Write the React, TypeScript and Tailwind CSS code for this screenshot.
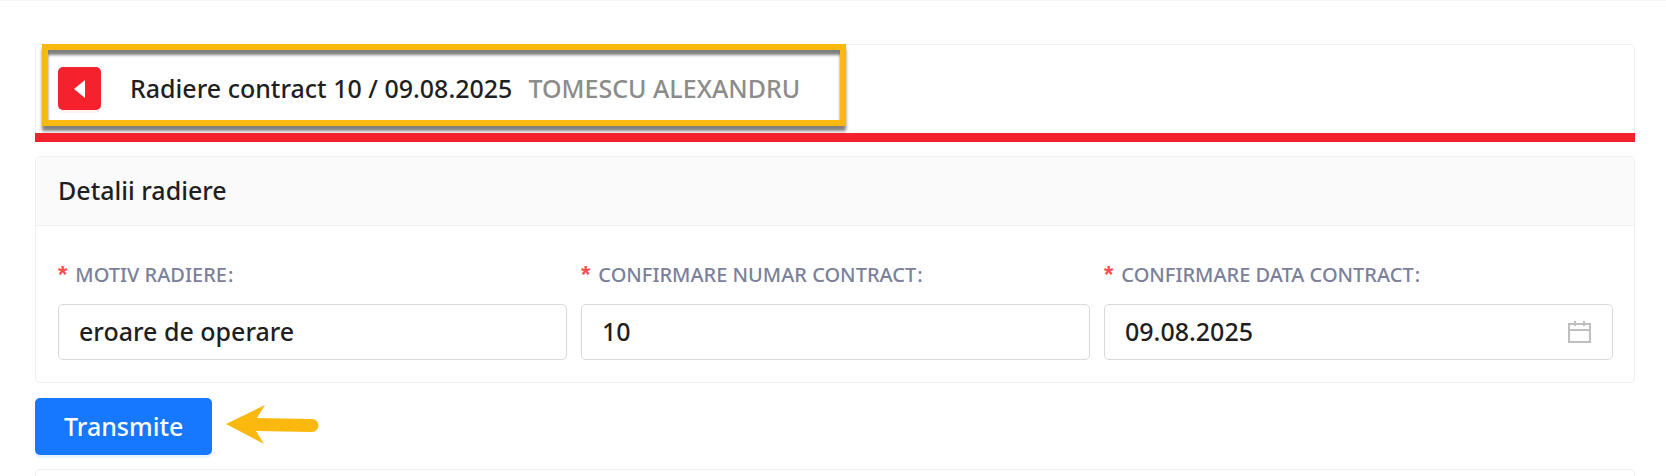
import React from "react";

const fields = [
  { id: "motiv", label: "MOTIV RADIERE", value: "eroare de operare" },
  { id: "numar", label: "CONFIRMARE NUMAR CONTRACT", value: "10" },
  { id: "data", label: "CONFIRMARE DATA CONTRACT", value: "09.08.2025", date: true },
];

function CalendarIcon() {
  return (
    <svg
      className="absolute right-[21px] top-4 size-6 pointer-events-none"
      viewBox="0 0 24 24"
      fill="none"
      stroke="#bfbfbf"
      strokeWidth="2"
      aria-hidden="true"
    >
      <path d="M1 4h21v18H1zM1 10h21M7 1v5M16 1v5" />
    </svg>
  );
}

function Field({ field }: { field: (typeof fields)[number] }) {
  return (
    <div className="flex-1 min-w-0">
      <label
        htmlFor={field.id}
        className="flex h-7 items-center text-[20px] leading-7 text-[#7b809a]"
      >
        <span
          className="mr-2 self-start font-['Liberation_Sans',sans-serif] text-[24px] leading-7 font-bold text-[#ff4d4f]"
          aria-hidden="true"
        >
          *
        </span>
        {field.label}
        <span className="ml-px">:</span>
      </label>
      <div className="relative mt-[15px]">
        <input
          id={field.id}
          type="text"
          required
          defaultValue={field.value}
          className="block w-full h-14 px-5 pb-[2px] rounded-[5px] border border-[#d9d9d9] bg-white text-[25px] font-medium outline-none"
        />
        {field.date && <CalendarIcon />}
      </div>
    </div>
  );
}

export default function App() {
  return (
    <div className="min-h-screen bg-white border-t border-[#f5f5f5] pt-[43px] pl-[35px] pr-[31px] font-['Noto_Sans',sans-serif] font-medium text-[#1f1f1f]">
      <header>
        <div className="relative flex items-center h-[89px] rounded-t-[5px] border border-b-0 border-[#f0f0f0] px-[22px] pb-px">
          <button
            type="button"
            aria-label="Inapoi"
            className="flex size-[43px] items-center justify-center rounded-[5px] bg-[#f5222d] shadow-[0_3px_0_rgba(255,38,5,0.06)]"
          >
            <svg className="w-[11px] h-[18px]" viewBox="0 0 11 18" fill="#fff" aria-hidden="true">
              <path d="M11 0v18L0 9z" />
            </svg>
          </button>
          <h1 className="ml-[29px] text-[25px] font-medium">Radiere contract 10 / 09.08.2025</h1>
          <span className="ml-4 text-[25px] text-[#8c8c8c]">TOMESCU ALEXANDRU</span>
          <div className="absolute left-[6px] -top-px w-[804px] h-[82px] border-[6px] border-[#fbb90f] shadow-[0_5px_3px_rgba(0,0,0,0.5),inset_0_5px_3px_rgba(0,0,0,0.5)] pointer-events-none" />
        </div>
        <div className="h-[9px] bg-[#f5222d]" />
      </header>

      <section className="mt-[14px] rounded-[5px] border border-[#f0f0f0]">
        <h2 className="flex h-[69px] items-center rounded-t-[5px] border-b border-[#f0f0f0] bg-[#fafafa] px-[22px] text-[25px] font-medium">
          Detalii radiere
        </h2>
        <form id="radiere" className="flex gap-[14px] pl-[22px] pr-[21px] pt-[35px] pb-[22px]">
          {fields.map((field) => (
            <Field key={field.id} field={field} />
          ))}
        </form>
      </section>

      <div className="mt-[15px] flex items-start">
        <button
          type="submit"
          form="radiere"
          className="h-[57px] rounded-[5px] bg-[#1677ff] px-[29px] text-[25px] text-white shadow-[0_3px_0_rgba(5,145,255,0.1)]"
        >
          Transmite
        </button>
        <svg className="mt-[7px] ml-[14px] w-[93px] h-10" viewBox="0 0 93 40" fill="#fbb90f" aria-hidden="true">
          <path d="M0 19L39 0L31 13L86 14a6.500 6.500 0 0 1 0 13L30 26L38 39z" />
        </svg>
      </div>

      <section className="mt-[14px] h-[7px] rounded-t-[5px] border border-b-0 border-[#f0f0f0]" />
    </div>
  );
}
